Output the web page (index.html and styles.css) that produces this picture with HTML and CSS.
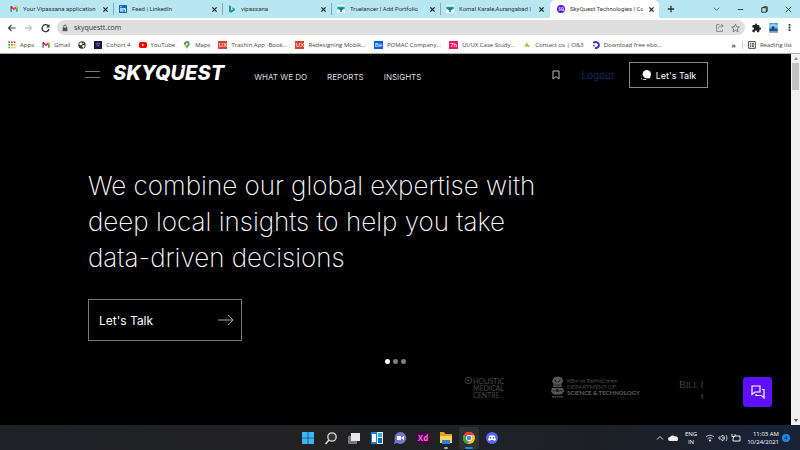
FILE: index.html
```html
<!DOCTYPE html>
<html lang="en">
<head>
<meta charset="utf-8">
<title>SkyQuest Technologies</title>
<link rel="stylesheet" href="styles.css">
</head>
<body>
<svg class="defs" aria-hidden="true">
  <symbol id="gmail" viewBox="0 0 24 24"><path fill="#4285f4" d="M1 20V6l5 4v10z"/><path fill="#34a853" d="M18 20V10l5-4v14z"/><path fill="#ea4335" d="M6 4l6 5 6-5v7l-6 5-6-5z"/><path fill="#c5221f" d="M1 6c0-3 3-4 5-2v7L1 7z"/><path fill="#fbbc04" d="M23 6c0-3-3-4-5-2v7l5-4z"/></symbol>
  <symbol id="truelancer" viewBox="0 0 24 24"><path fill="#f4f8f9" d="M0 0h24v24H0z"/><path fill="#0e9db0" d="M1 5h22v8H1z"/><path fill="#087384" d="M7 10h10v4l-3 1v6h-4v-6l-3-1z"/></symbol>
  <symbol id="close" viewBox="0 0 10 10"><path d="M2 2l6 6M8 2L2 8" stroke="currentColor" stroke-width="1.8" fill="none"/></symbol>
</svg>

<header class="browser">
  <div class="tabbar">
    <div class="tab"><svg class="ico"><use href="#gmail"/></svg><span class="tab-title">Your Vipassana application</span><button class="close" aria-label="Close tab"><svg><use href="#close"/></svg></button></div>
    <div class="tab"><svg class="ico" viewBox="0 0 24 24"><rect width="24" height="24" rx="2" fill="#0a66c2"/><path fill="#fff" d="M4 9h4v11H4zM4 4h4v3H4zM10 9h3v2c2-3 8-3 8 3v6h-4v-6c0-3-4-3-4 0v6h-3z"/></svg><span class="tab-title">Feed | LinkedIn</span><button class="close" aria-label="Close tab"><svg><use href="#close"/></svg></button></div>
    <div class="tab"><svg class="ico" viewBox="0 0 24 24"><path fill="#2a9088" d="M3 1l6 3v12l12-6v6L9 23l-6-3z"/><path fill="#49aaa0" d="M11 7l10 4v5l-7-3z"/></svg><span class="tab-title">vipassana</span><button class="close" aria-label="Close tab"><svg><use href="#close"/></svg></button></div>
    <div class="tab"><svg class="ico"><use href="#truelancer"/></svg><span class="tab-title">Truelancer | Add Portfolio</span><button class="close" aria-label="Close tab"><svg><use href="#close"/></svg></button></div>
    <div class="tab"><svg class="ico"><use href="#truelancer"/></svg><span class="tab-title">Komal Karale,Aurangabad |</span><button class="close" aria-label="Close tab"><svg><use href="#close"/></svg></button></div>
    <div class="tab active"><svg class="ico" viewBox="0 0 24 24"><circle cx="12" cy="12" r="12" fill="#5a14e6"/><path d="M11 8H6v4h4v4H5M14 8h5v8h-5zM17 14l3 4" fill="none" stroke="#fff" stroke-width="2"/></svg><span class="tab-title">SkyQuest Technologies | Co</span><button class="close" aria-label="Close tab"><svg><use href="#close"/></svg></button></div>
    <button class="newtab" aria-label="New tab"><svg viewBox="0 0 10 10"><path d="M5 1v8M1 5h8" stroke="#333" stroke-width="1.6"/></svg></button>
    <div class="window-controls">
      <button aria-label="Search tabs"><svg viewBox="0 0 10 10"><path d="M2 3l3 3 3-3" fill="none" stroke="#456" stroke-width="1"/></svg></button>
      <button aria-label="Minimize"><svg viewBox="0 0 10 10"><path d="M2 5h6" stroke="#333"/></svg></button>
      <button aria-label="Restore"><svg viewBox="0 0 10 10"><path d="M2 3h5v5H2zM4 3V2h4v5H7" fill="none" stroke="#222"/></svg></button>
      <button aria-label="Close"><svg viewBox="0 0 10 10"><path d="M2 2l6 6M8 2L2 8" stroke="#333" stroke-width="1"/></svg></button>
    </div>
  </div>

  <div class="toolbar">
    <button aria-label="Back"><svg viewBox="0 0 10 10"><path d="M9 5H2M5 2L2 5l3 3" fill="none" stroke="#444" stroke-width="1.2"/></svg></button>
    <button aria-label="Forward"><svg viewBox="0 0 10 10"><path d="M1 5h7M5 2l3 3-3 3" fill="none" stroke="#aaa" stroke-width="1"/></svg></button>
    <button aria-label="Reload"><svg viewBox="0 0 10 10"><path d="M8 3.2A3.5 3.5 0 1 0 8.5 6" fill="none" stroke="#333" stroke-width="1.3"/><path d="M9 1v3.500H5.500z" fill="#333"/></svg></button>
    <div class="omnibox">
      <svg class="lock" viewBox="0 0 10 10"><path d="M2 4.500h6V9H2z" fill="#555"/><path d="M3.300 5V3a1.700 1.700 0 0 1 3.400 0v2" fill="none" stroke="#555" stroke-width="1.100"/></svg>
      <input type="text" value="skyquestt.com" aria-label="Address">
      <button aria-label="Share"><svg viewBox="0 0 12 12"><path d="M6 2H2.500v8h7V8M4.500 7c0-2.500 2-3.500 5.500-3.500M8 1.500l2.500 2L8 5.500" fill="none" stroke="#777" stroke-width="1"/></svg></button>
      <button aria-label="Bookmark this tab"><svg viewBox="0 0 12 12"><path d="M6 1.500l1.400 3 3.300.400-2.400 2.200.600 3.300L6 8.800l-2.900 1.600.600-3.300L1.300 4.900l3.300-.400z" fill="none" stroke="#666" stroke-width="1"/></svg></button>
    </div>
    <button aria-label="Extensions"><svg viewBox="0 0 24 24"><path fill="#222" d="M20.500 11H19V7a2 2 0 0 0-2-2h-4V3.500a2.500 2.500 0 0 0-5 0V5H4a2 2 0 0 0-2 2v3.800h1.500a2.700 2.700 0 0 1 0 5.400H2V20a2 2 0 0 0 2 2h3.800v-1.500a2.700 2.700 0 0 1 5.400 0V22H17a2 2 0 0 0 2-2v-4h1.500a2.500 2.500 0 0 0 0-5z"/></svg></button>
    <button class="avatar" aria-label="Profile"><svg viewBox="0 0 12 12"><path fill="#3f9fe0" d="M1 0h10v12H1z"/><path fill="#9bd1f0" d="M1 2l5-1 5 2v2H1z"/><path fill="#15599b" d="M1 7h10v3H1z"/><path fill="#28425f" d="M4 4h3v4H4z"/><path fill="#c2a58b" d="M2 10h8v2H2z"/></svg></button>
    <button class="more" aria-label="Menu"><svg viewBox="0 0 10 10"><path d="M4 1h2v2H4zM4 4h2v2H4zM4 7h2v2H4z" fill="#333"/></svg></button>
  </div>

  <nav class="bookmarks" aria-label="Bookmarks">
    <a href="#"><svg class="ico" viewBox="0 0 24 24"><path fill="#ea4335" d="M1 1h5v5H1zM9 1h5v5H9zM17 1h5v5h-5z"/><path fill="#34a853" d="M1 9h5v5H1z"/><path fill="#4285f4" d="M9 9h5v5H9z"/><path fill="#fbbc04" d="M17 9h5v5h-5zM9 17h5v5H9zM17 17h5v5h-5z"/><path fill="#34a853" d="M1 17h5v5H1z"/></svg>Apps</a>
    <a href="#"><svg class="ico"><use href="#gmail"/></svg>Gmail</a>
    <a href="#" aria-label="Site"><svg class="ico" viewBox="0 0 24 24"><circle cx="12" cy="12" r="11" fill="#333"/><path fill="#fff" d="M4 7l5-3 5 3-3 5-4 1-3-3zM13 13l6-1 1 4-4 5-3-3zM16 4l3 3-3 2z"/></svg></a>
    <a href="#"><svg class="ico" viewBox="0 0 24 24"><path fill="#211642" d="M0 0h24v24H0z"/><path fill="#8d76c8" d="M6 7h12v3H6zM8 13h8v3H8z"/></svg>Cohort 4</a>
    <a href="#"><svg class="ico" viewBox="0 0 24 24"><rect y="3" width="24" height="18" rx="5" fill="#f00"/><path fill="#fff" d="M9 8l7 4-7 4z"/></svg>YouTube</a>
    <a href="#"><svg class="ico" viewBox="0 0 24 24"><path fill="#34a853" d="M4 9a8 8 0 0 1 16 0c0 6-6 7-8 15-2-8-8-9-8-15z"/><path fill="#4285f4" d="M12 1a8 8 0 0 1 7 4l-9 10-5-3z"/><path fill="#ea4335" d="M6 3l4 4-5 5c-2-3-1-7 1-9z"/><path fill="#fbbc04" d="M5 12l5-5 4 4-6 6z"/><circle cx="12" cy="9" r="3" fill="#fff"/></svg>Maps</a>
    <a href="#"><span class="badge ux">UX</span>Trashin App -Book...</a>
    <a href="#"><span class="badge ux">UX</span>Redesigning Mobik...</a>
    <a href="#"><span class="badge be">Bē</span>POMAC Company...</a>
    <a href="#"><span class="badge pink">7h</span>UI/UX Case Study...</a>
    <a href="#"><svg class="ico" viewBox="0 0 24 24"><path fill="#8dc92d" d="M10 6c5 0 5 3 4 6l6 1c0 6-6 6-8 2-3 4-8 3-8-1l5-1c-2-2-2-5 1-7z"/></svg>Contact us | O&amp;3</a>
    <a href="#"><svg class="ico" viewBox="0 0 24 24"><path fill="none" stroke="#3537c9" stroke-width="6" d="M4 6c7-6 17-1 17 6 0 6-6 10-12 9"/><path fill="#3537c9" d="M2 11l7 2-3 5z"/></svg>Download free ebo...</a>
    <div class="bookmarks-end"><span class="overflow">»</span><a class="reading" href="#"><svg class="ico" viewBox="0 0 24 24"><path fill="none" stroke="#444" stroke-width="3" d="M2 2h20v20H2zM6 8h4M6 12h4M6 16h4M12 8h6M12 12h6M12 16h6"/></svg>Reading list</a></div>
  </nav>
</header>

<div class="viewport">
  <main class="page">
    <div class="site-header">
      <button class="burger" aria-label="Open menu"><span></span><span></span></button>
      <a class="logo" href="#">SKYQUEST<svg class="logo-star" viewBox="0 0 10 10"><path d="M0 0l3 2 2-2 1 3 4 1-3 2 0 4-3-3-3 1 1-4z"/></svg></a>
      <nav class="site-nav"><a href="#">WHAT WE DO</a><a href="#">REPORTS</a><a href="#">INSIGHTS</a></nav>
      <div class="account">
        <a href="#" aria-label="Saved"><svg class="save" viewBox="0 0 8 10"><path d="M1 1h6v8L4 6.500 1 9z" fill="none" stroke="#bbb"/></svg></a>
        <a class="logout" href="#">Logout</a>
        <button class="talk-small"><svg viewBox="0 0 12 12"><circle cx="7" cy="5" r="5" fill="#fff"/><path d="M11 5v5H7z" fill="#fff"/><path d="M1.500 5A4 4 0 0 0 7 11H0V7.500z" fill="#fff"/></svg>Let's Talk</button>
      </div>
    </div>

    <section class="hero">
      <h1>We combine our global expertise with<br>deep local insights to help you take<br>data-driven decisions</h1>
      <button class="talk-large">Let's Talk<svg viewBox="0 0 16 12"><path d="M0 6h15M10 1l5 5-5 5" fill="none" stroke="#aaa" stroke-width="1"/></svg></button>
    </section>

    <div class="dots"><button class="on" aria-label="Slide 1"></button><button aria-label="Slide 2"></button><button aria-label="Slide 3"></button></div>

    <div class="clients">
      <div class="client holistic"><svg viewBox="0 0 10 10"><circle cx="5" cy="5" r="3.500" fill="none" stroke="#484848"/><circle cx="5" cy="5" r="1.200" fill="#484848"/></svg><span>HOLISTIC<br>MEDICAL<br>CENTRE</span></div>
      <div class="client dst"><svg viewBox="0 0 14 23"><path fill="#575757" d="M3 1l3-1h3l3 1 1 4-2 3 1 3H2l1-3-2-3zM1 12h12l1 4-3 3H3l-3-3z"/><path d="M4 3l2 3M10 3L8 6M4 9h6M2 15h3M9 15h3" stroke="#151515"/><circle cx="7" cy="15" r="1.500" fill="#151515"/><path d="M1 21.500h12" stroke="#484848" stroke-width="1.500" stroke-dasharray="2 .5"/></svg><span><small lang="hi">विज्ञान एवं प्रौद्योगिकी विभाग</small>DEPARTMENT OF<b>SCIENCE &amp; TECHNOLOGY</b></span></div>
      <div class="client gates"><span>B<small>ILL</small> &amp;</span><span class="second">G</span></div>
    </div>
    <button class="chat" aria-label="Chat"><svg viewBox="0 0 14 14"><path d="M1 1h8v6H4L1 9.500zM11 4.500h2V13l-2.500-2.500H5V9" fill="none" stroke="#fff" stroke-width="1.200"/></svg></button>
  </main>
  <div class="scrollbar"><span class="arrow up"></span><span class="thumb"></span><span class="arrow down"></span></div>
</div>

<footer class="taskbar">
  <div class="apps">
    <button aria-label="Start"><svg viewBox="0 0 14 14"><path fill="#38b6f5" d="M1 1h5.700v5.700H1zM7.300 1H13v5.700H7.300zM1 7.300h5.700V13H1zM7.300 7.300H13V13H7.300z"/></svg></button>
    <button aria-label="Search"><svg viewBox="0 0 14 14"><circle cx="8" cy="6" r="4.200" fill="#333" stroke="#ddd" stroke-width="1.300"/><path d="M5 9l-3.500 4" stroke="#ddd" stroke-width="1.500"/></svg></button>
    <button aria-label="Task view"><svg viewBox="0 0 14 14"><path fill="#777" d="M1 5h9v8H1z"/><path fill="#e8e8e8" d="M4 2h9v8H4z"/></svg></button>
    <button aria-label="Widgets"><svg viewBox="0 0 14 14"><rect x="1" y="1" width="12" height="12" fill="#eef7ff"/><path fill="#1683df" d="M1 1h6v12H1z"/><path fill="#fff" d="M2 3h4v8H2z"/><path fill="#37adf4" d="M8 2h4v4H8z"/><path fill="#1168b7" d="M8 7h4v5H8z"/></svg></button>
    <button aria-label="Chat app"><svg viewBox="0 0 14 14"><path fill="#7476cf" d="M7 1a6 6 0 1 1-3 11l-3 1 1-4A6 6 0 0 1 7 1z"/><path fill="#fff" d="M4 5h4v4H4zM8.500 6.500L11 5v4L8.500 7.500z"/></svg></button>
    <button aria-label="Adobe XD"><span class="xd">Xd</span></button>
    <button class="running" aria-label="File Explorer"><svg viewBox="0 0 14 14"><path fill="#e4a11d" d="M1 1h4l1.500 2H13v9H1z"/><path fill="#ffd45d" d="M1 5h12v7H1z"/><path fill="#2487cf" d="M3 9h8v4H3z"/></svg></button>
    <button class="current" aria-label="Chrome"><svg viewBox="0 0 14 14"><circle cx="7" cy="7" r="6" fill="#fbc11e"/><path fill="#e34133" d="M1.800 4A6 6 0 0 1 12.200 4H7L4.400 8.500z"/><path fill="#32a350" d="M1.800 4l2.600 4.500L7 10l-1 3A6 6 0 0 1 1.800 4z"/><circle cx="7" cy="7" r="3" fill="#fff"/><circle cx="7" cy="7" r="2.300" fill="#4285f4"/></svg></button>
    <button aria-label="Discord"><svg viewBox="0 0 14 14"><circle cx="7" cy="7" r="6" fill="#5865f2"/><path fill="#fff" d="M4.500 4.500h5L11 9 9 10 8.500 9h-3L5 10 3 9z"/><path fill="#5865f2" d="M5 6h1.300v1.500H5zM7.700 6H9v1.500H7.700z"/></svg></button>
  </div>
  <div class="tray">
    <svg viewBox="0 0 10 10"><path d="M2 6.500l3-3 3 3" fill="none" stroke="#ddd" stroke-width="1"/></svg>
    <svg viewBox="0 0 10 10"><path d="M2 8a2 2 0 0 1 0-4 3 3 0 0 1 5-.500A2.300 2.300 0 0 1 8.500 8z" fill="#eee"/></svg>
    <span class="lang">ENG<br>IN</span>
    <svg viewBox="0 0 10 10"><path d="M1 4c2.500-2.300 5.500-2.300 8 0M2.600 5.800c1.500-1.400 3.300-1.400 4.800 0" fill="none" stroke="#bbb" stroke-width="1"/><circle cx="5" cy="7.500" r="1" fill="#fff"/></svg>
    <svg viewBox="0 0 10 10"><path d="M1 4h1.500L5 2v6L2.500 6H1zM6.500 3.500v3M8 2c1.300 2 1.300 4 0 6" fill="none" stroke="#ddd" stroke-width=".9"/></svg>
    <svg viewBox="0 0 10 10"><path d="M4 3h5v5H2V5.500M1 1v2.500h3V1M2.500 3.500V5.500" fill="none" stroke="#eee" stroke-width="1"/></svg>
    <span class="clock">11:03 AM<br>10/24/2021</span>
    <span class="count">4</span>
  </div>
</footer>
</body>
</html>
```

FILE: styles.css
```css
* { box-sizing: border-box; }
body {
  margin: 0;
  height: 100vh;
  display: flex;
  flex-direction: column;
  overflow: hidden;
  font-family: "Open Sans", "Noto Sans", sans-serif;
  background: #000;
}
button { border: 0; padding: 0; background: none; font: inherit; color: inherit; display: flex; align-items: center; justify-content: center; }
a { color: inherit; text-decoration: none; }
svg { display: block; flex: none; }
.defs { position: absolute; width: 0; height: 0; }
.ico { width: 8px; height: 8px; flex: none; }

/* Browser chrome */
.browser { background: #fff; color: #333; font-size: 6px; border-bottom: 1px solid #aaa; }
.tabbar { display: flex; align-items: center; height: 18px; padding-left: 5px; background: #b6e7f2; }
.tab { flex: 0 1 109px; min-width: 0; height: 12px; display: flex; align-items: center; gap: 5px; padding: 0 4px 0 5px; border-right: 1px solid #83a9b2; }
.tab:nth-child(5) { border-color: transparent; }
.tab.active { height: 18px; padding-left: 7px; border: 0; background: #fff; border-radius: 5px 5px 0 0; }
.tab-title { flex: 1; min-width: 0; overflow: hidden; white-space: nowrap; font-family: Roboto, sans-serif; line-height: 10px; }
.close svg { width: 7px; height: 7px; color: #222; }
.newtab { margin-left: 8px; }
.newtab svg { width: 8px; height: 8px; }
.window-controls { margin-left: auto; margin-right: 6px; display: flex; gap: 13px; }
.window-controls svg { width: 11px; height: 9px; }

.toolbar { display: flex; align-items: center; height: 19px; padding: 0 6px 0 6px; gap: 6px; }
.toolbar svg { width: 11px; height: 10px; }
.omnibox { flex: 1; min-width: 0; height: 15px; display: flex; align-items: center; gap: 5px; padding: 0 4px; border-radius: 8px; background: #dfdfdf; }
.omnibox .lock { width: 8px; height: 8px; }
.omnibox input { flex: 1; min-width: 0; border: 0; padding: 0; background: none; font: 7px "Open Sans", sans-serif; color: #333; outline: 0; }
.toolbar .more svg { width: 9px; height: 9px; }

.bookmarks { display: flex; align-items: center; gap: 8px; height: 16px; padding: 0 8px; white-space: nowrap; color: #444; }
.bookmarks a { display: flex; align-items: center; gap: 4px; }
.badge { width: 9px; height: 8px; font: 6px/8px "Liberation Sans", sans-serif; color: #fff; text-align: center; }
.ux { background: #dc4030; }
.be { background: #0a5df0; }
.pink { background: #f0186d; }
.bookmarks-end { margin-left: auto; display: flex; align-items: center; gap: 6px; }
.overflow { font-size: 7px; font-weight: 700; }
.reading { padding-left: 5px; border-left: 1px solid #ccc; }

/* Site */
.viewport { flex: 1; min-height: 0; display: flex; }
.page { position: relative; flex: 1; min-width: 0; display: flex; flex-direction: column; overflow: hidden; background: #000; color: #fff; font-family: Inter, sans-serif; }
.site-header { display: flex; align-items: center; padding: 8px 83px 0 85px; height: 34px; }
.burger { width: 15px; flex-direction: column; gap: 5px; align-items: stretch; margin-bottom: 2px; }
.burger span { height: 1px; background: #777; }
.logo { position: relative; margin: 0 0 4px 13px; font-size: 20px; line-height: 20px; font-weight: 800; font-style: italic; }
.logo-star { position: absolute; left: 57%; top: 2px; width: 7px; height: 8px; }
.site-nav { display: flex; gap: 20px; margin: 4px 0 0 30px; font-size: 8px; line-height: 10px; font-weight: 400; color: #ddd; white-space: nowrap; }
.account { margin-left: auto; display: flex; align-items: center; }
.save { width: 8px; height: 10px; }
.logout { margin: 0 15px 0 22px; font-size: 10px; font-weight: 300; color: #123f7d; }
.talk-small { width: 79px; height: 26px; gap: 5px; border: 1px solid #888; font-size: 9px; white-space: nowrap; }
.talk-small svg { width: 10px; height: 10px; }

.hero { padding: 80px 88px 0; }
h1 { margin: 0; font-size: 26px; line-height: 36px; font-weight: 200; white-space: nowrap; }
.talk-large { width: 154px; height: 42px; margin-top: 23px; padding: 0 7px 0 10px; border: 1px solid #777; justify-content: space-between; font-size: 12px; font-weight: 400; }
.talk-large svg { width: 16px; height: 12px; }

.dots { display: flex; justify-content: center; gap: 3px; margin-top: 18px; }
.dots button { width: 5px; height: 5px; border-radius: 50%; background: #808080; }
.dots .on { background: #fff; }

.clients { display: flex; margin: 12px 88px 0 auto; width: 239px; height: 27px; overflow: hidden; color: #484848; }
.client { display: flex; white-space: nowrap; }
.holistic { width: 87px; font: 7px/7px Lato, sans-serif; }
.holistic svg { width: 9px; height: 9px; }
.holistic span { padding-top: 2px; }
.dst { width: 128px; gap: 3px; font: 6px/6px Lato, "Noto Sans", sans-serif; }
.dst svg { width: 13px; height: 23px; }
.dst span { padding-top: 2px; }
.dst small { display: block; font-size: 5px; }
.dst b { display: block; font-weight: 900; color: #5a5a5a; }
.gates { width: 24px; flex-direction: column; overflow: hidden; font: 10px/11px "Liberation Serif", serif; padding-top: 3px; }
.gates small { font-size: 8px; }
.gates .second { align-self: flex-end; width: 2px; overflow: hidden; }

.chat { position: absolute; right: 19px; bottom: 18px; width: 29px; height: 30px; border-radius: 3px; background: #5e0fff; }
.chat svg { width: 14px; height: 14px; }

.scrollbar { width: 9px; flex: none; display: flex; flex-direction: column; align-items: center; background: #f0f0f0; padding: 3px 0; }
.arrow { border: 2px solid transparent; height: 0; }
.up { border-top: 0; border-bottom: 3px solid #888; }
.thumb { width: 7px; height: 27px; margin-top: 3px; background: #c1c1c1; }
.down { margin-top: auto; border-bottom: 0; border-top: 3px solid #555; }

/* Taskbar */
.taskbar { height: 25px; flex: none; display: grid; grid-template-columns: 1fr auto 1fr; align-items: center; color: #fff; background: linear-gradient(to right, #202127, #222223 40%, #1c2026 75%, #182238); }
.apps { grid-column: 2; display: flex; gap: 3px; }
.apps button { position: relative; width: 20px; height: 22px; }
.apps svg { width: 14px; height: 14px; }
.current { background: #303133; border-radius: 2px; }
.running::after, .current::after { content: ""; position: absolute; bottom: 0; width: 4px; height: 2px; border-radius: 1px; background: #aaa; }
.current::after { width: 8px; background: #1a86dc; }
.xd { width: 12px; height: 12px; border-radius: 2px; background: #470137; color: #ff61f6; font: 700 8px/12px "Open Sans", sans-serif; }
.tray { justify-self: end; display: flex; align-items: center; gap: 3px; padding-right: 10px; font-size: 6px; line-height: 8px; }
.tray svg { width: 10px; height: 10px; }
.lang { margin: 0 5px 0 4px; text-align: center; }
.clock { margin-left: 3px; text-align: right; }
.count { width: 8px; height: 8px; border-radius: 50%; background: #168cf0; color: #012; text-align: center; }
```
